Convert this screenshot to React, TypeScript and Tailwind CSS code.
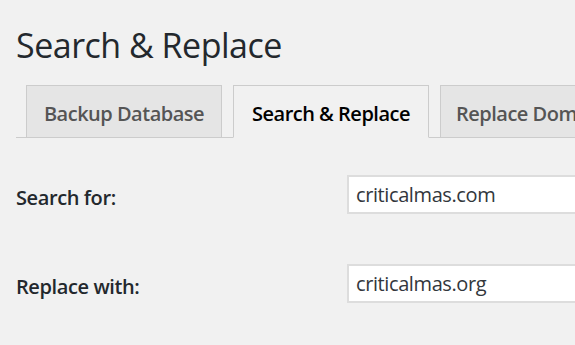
import React from "react";

const tabs = [
  { label: "Backup Database", active: false, w: "w-[196px] justify-center" },
  { label: "Search & Replace", active: true, w: "w-[196px] justify-center" },
  { label: "Replace Domain/URL", active: false, w: "px-[15px]" },
];

const rows = [
  { label: "Search for:", value: "criticalmas.com" },
  { label: "Replace with:", value: "criticalmas.org" },
];

export default function App() {
  return (
    <div
      className="w-[575px] h-[345px] overflow-hidden bg-[#f1f1f1] text-[#23282d]"
      style={{ fontFamily: '"Open Sans", "Noto Sans", sans-serif' }}
    >
      <div className="pl-[16px] pt-[21px]">
        <h1 className="text-[34px] leading-[48px] font-normal tracking-[-0.5px] text-[#23282d]">
          Search &amp; Replace
        </h1>

        {/* tabs */}
        <div className="mt-[16px] flex border-b border-[#ccc] pl-[10px] w-[800px] gap-[11px]">
          {tabs.map((t) => (
            <div
              key={t.label}
              className={`-mb-px shrink-0 h-[53px] flex items-center pt-[4px] border border-[#ccc] text-[20px] font-semibold whitespace-nowrap ${t.w} ${
                t.active
                  ? "bg-[#f1f1f1] border-b-[#f1f1f1] text-[#000]"
                  : "bg-[#e5e5e5] text-[#555]"
              }`}
            >
              <span className="tracking-[-0.5px]">{t.label}</span>
            </div>
          ))}
        </div>

        {/* form */}
        <div className="mt-[37px] flex flex-col gap-[50px]">
          {rows.map((r) => (
            <div key={r.label} className="flex items-center">
              <label className="w-[331px] shrink-0 pt-[7px] text-[20px] font-semibold text-[#23282d] tracking-[-0.4px]">
                {r.label}
              </label>
              <input
                readOnly
                value={r.value}
                className="w-[400px] shrink-0 h-[39px] border-2 border-[#ddd] bg-white px-[7px] text-[20px] text-[#32373c] tracking-[-0.4px] outline-none"
                style={{ fontFamily: '"Open Sans", "Noto Sans", sans-serif' }}
              />
            </div>
          ))}
        </div>
      </div>
    </div>
  );
}
